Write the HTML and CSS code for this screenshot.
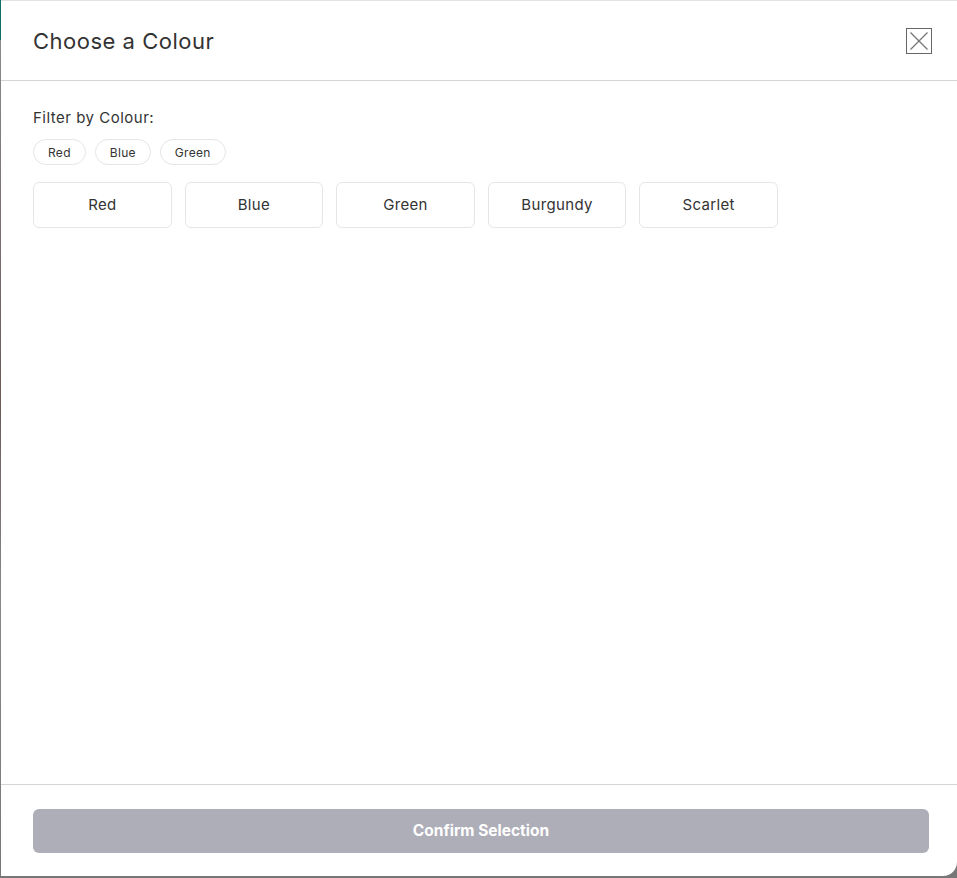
FILE: index.html
```html
<!DOCTYPE html>
<html lang="en">
<head>
    <meta charset="UTF-8">
    <meta name="viewport" content="width=device-width, initial-scale=1.0">
    <title>Choose a Colour</title>
    <link rel="stylesheet" href="styles.css">
</head>
<body>

<div class="modal">
    <div class="modal-header">
        <h1>Choose a Colour</h1>
        <button class="close-btn" aria-label="Close">
            <svg width="26" height="26" viewBox="0 0 26 26">
                <rect x="0.5" y="0.5" width="25" height="25" fill="none" stroke="#666" stroke-width="1"/>
                <path d="M4.5 4.5 L21.5 21.5 M21.5 4.5 L4.5 21.5" stroke="#777" stroke-width="1.3" fill="none"/>
            </svg>
        </button>
    </div>

    <div class="modal-body">
        <p class="filter-label">Filter by Colour:</p>
        <div class="chips">
            <button class="chip">Red</button>
            <button class="chip">Blue</button>
            <button class="chip">Green</button>
        </div>
        <div class="options">
            <button class="option">Red</button>
            <button class="option">Blue</button>
            <button class="option">Green</button>
            <button class="option">Burgundy</button>
            <button class="option">Scarlet</button>
        </div>
    </div>

    <div class="modal-footer">
        <button class="confirm-btn" disabled>Confirm Selection</button>
    </div>
</div>

</body>
</html>
```

FILE: styles.css
```css
html, body {
    height: 100%;
}

body {
    margin: 0;
    padding: 0;
    font-family: Inter, 'Noto Sans', sans-serif;
    color: #333;
    background: linear-gradient(to bottom, #0f6f6a 0, #0f6f6a 40px, #8a8a8a 40px, #6a5a58 400px, #888 600px, #777 100%);
    overflow: hidden;
}

.modal {
    box-sizing: border-box;
    height: 876px;
    margin-left: 1px;
    background-color: #fff;
    border-top: 1px solid #e2e2e2;
    border-bottom-right-radius: 14px;
    display: flex;
    flex-direction: column;
}

.modal-header {
    height: 79px;
    border-bottom: 1px solid #d4d4d4;
    display: flex;
    align-items: center;
    justify-content: space-between;
    padding: 0 25px 0 32px;
}

.modal-header h1 {
    margin: 0;
    font-size: 22px;
    font-weight: 400;
    letter-spacing: 0.5px;
    color: #333;
}

.close-btn {
    background: none;
    border: none;
    padding: 0;
    width: 26px;
    height: 26px;
    cursor: pointer;
}

.close-btn svg {
    display: block;
}

.modal-body {
    flex: 1;
    padding: 27px 32px 0 32px;
}

.filter-label {
    margin: 0 0 11px 0;
    font-size: 15px;
    line-height: 20px;
    font-weight: 400;
    letter-spacing: 0.5px;
    color: #333;
}

.chips {
    display: flex;
    gap: 9px;
}

.chip {
    font-family: inherit;
    font-size: 12px;
    letter-spacing: 0.3px;
    color: #333;
    background-color: #fff;
    border: 1px solid #e6e6e6;
    border-radius: 13px;
    height: 26px;
    padding: 0 14px;
    cursor: pointer;
}

.options {
    display: flex;
    gap: 12.9px;
    margin-top: 17px;
}

.option {
    font-family: inherit;
    width: 138.7px;
    height: 46px;
    padding-bottom: 2px;
    font-size: 15px;
    letter-spacing: 0.35px;
    color: #333;
    background-color: #fff;
    border: 1px solid #e6e6e6;
    border-radius: 6px;
    cursor: pointer;
}

.modal-footer {
    border-top: 1px solid #d4d4d4;
    padding: 24px 28px 23px 32px;
}

.confirm-btn {
    width: 100%;
    height: 44px;
    padding-bottom: 2px;
    font-family: inherit;
    font-size: 15.5px;
    font-weight: 700;
    color: #fff;
    background-color: #aeaeb8;
    border: none;
    border-radius: 6px;
}
```
